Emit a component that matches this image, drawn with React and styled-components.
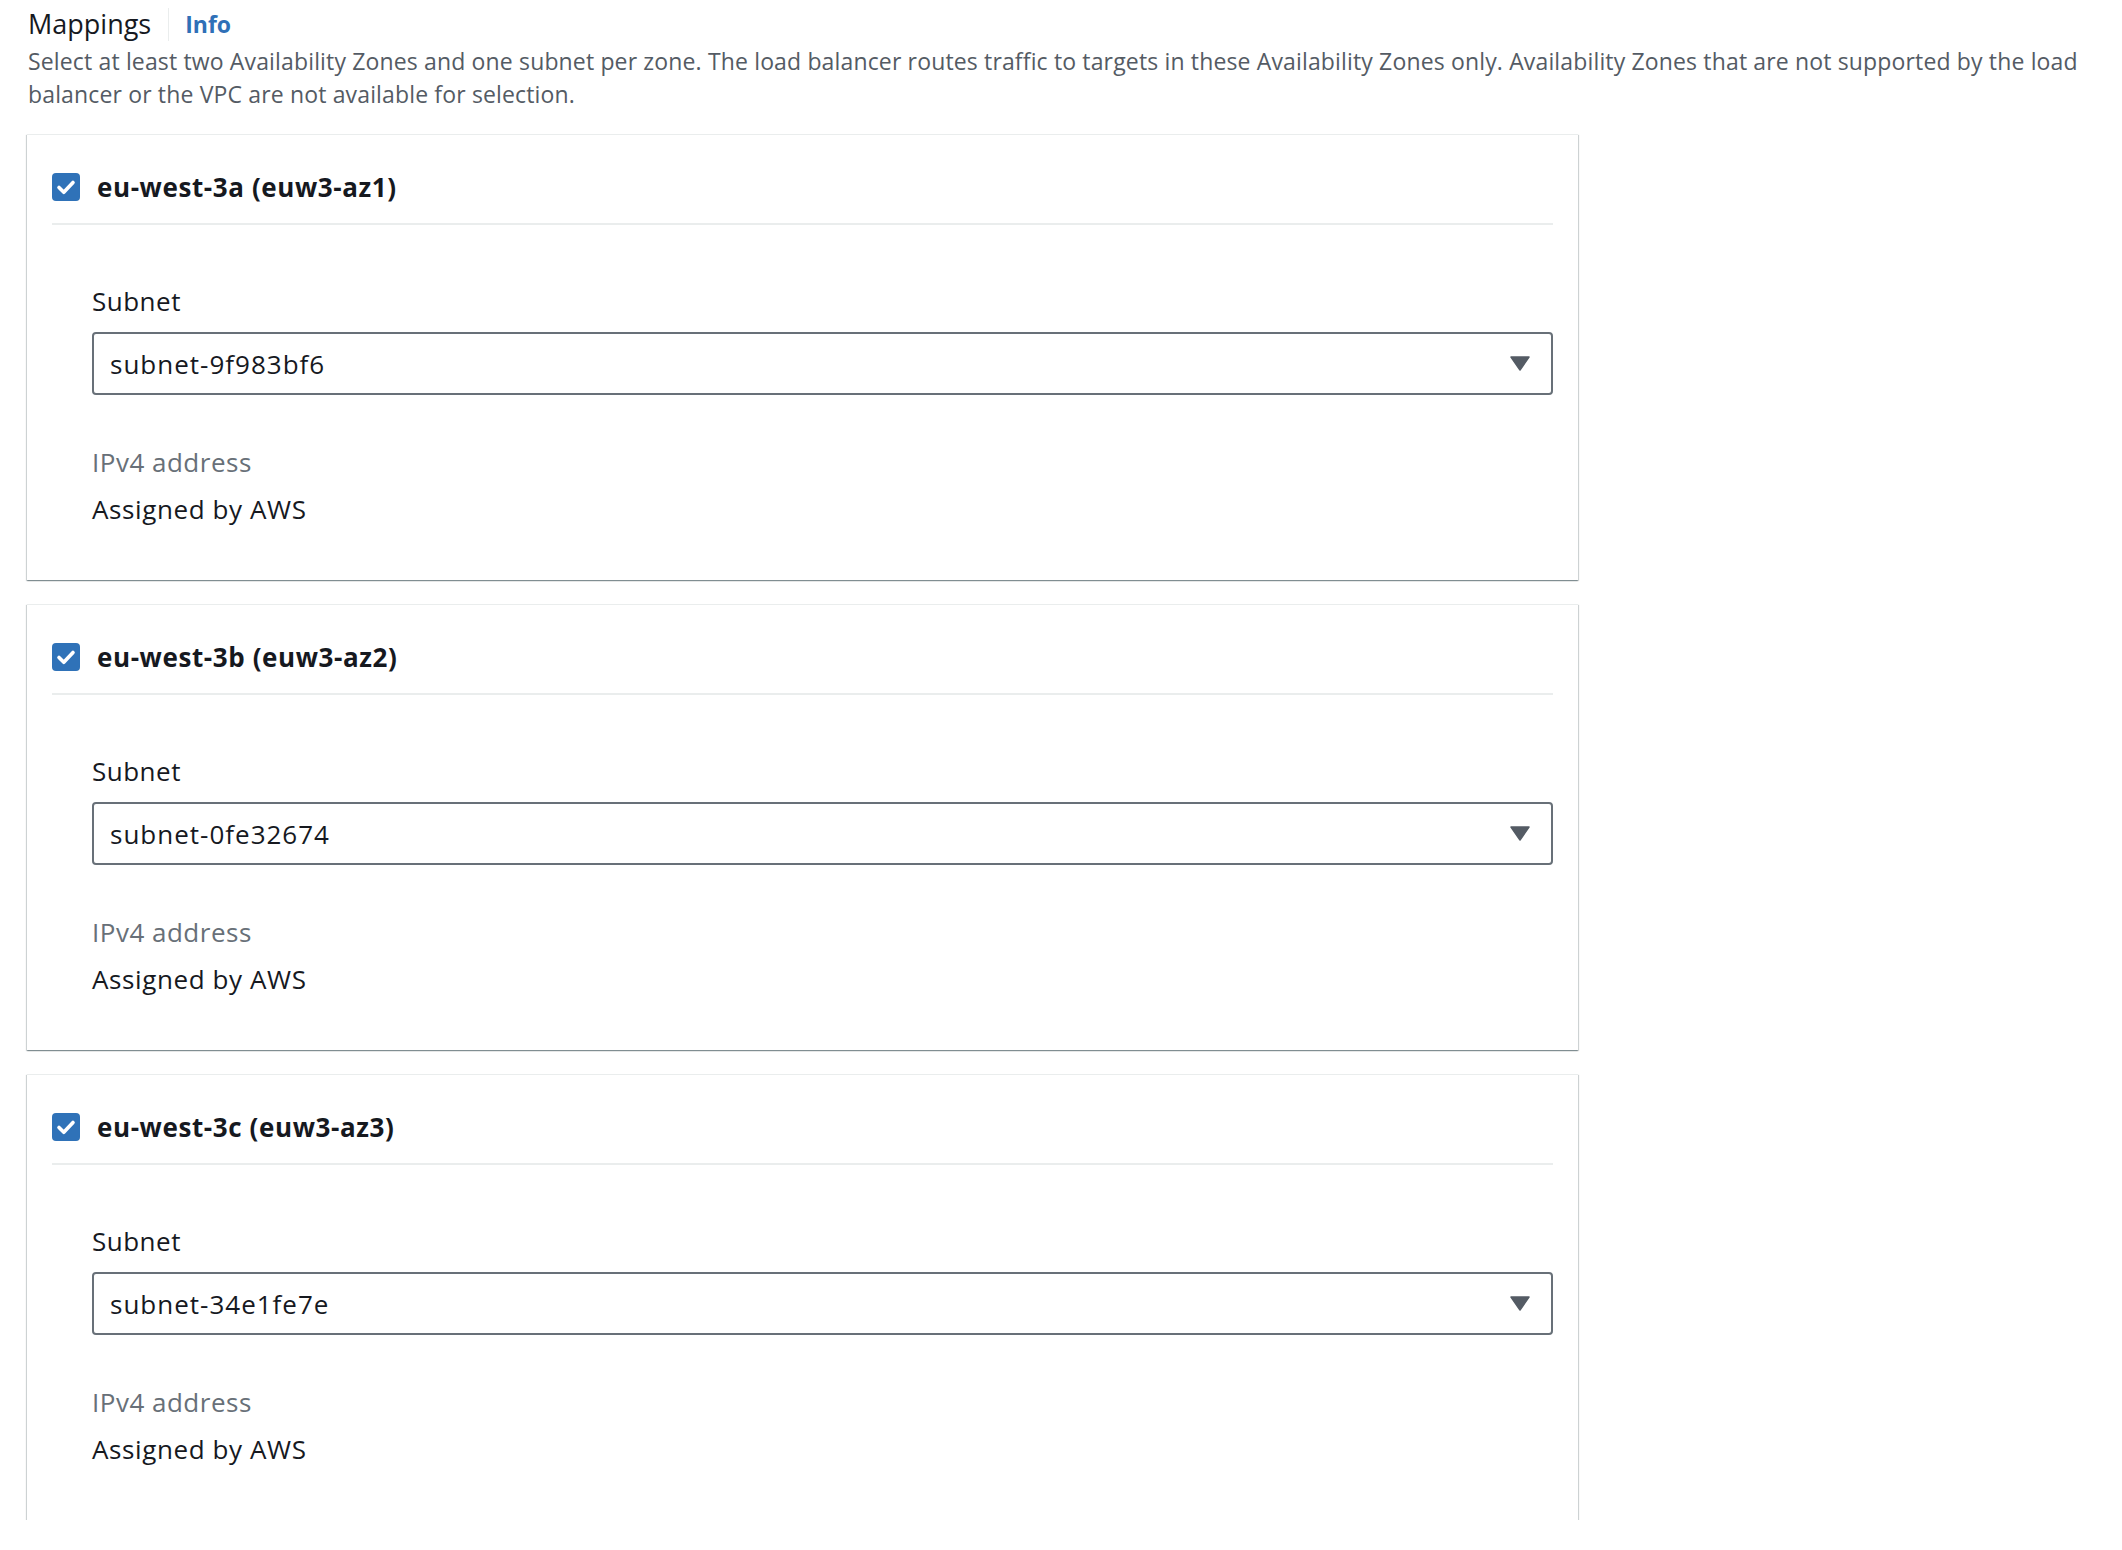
import React from 'react'
import styled, { createGlobalStyle } from 'styled-components'

const GlobalStyle = createGlobalStyle`
    body {
        margin: 0;
        background: #ffffff;
        font-family: 'Open Sans', 'Liberation Sans', Arial, sans-serif;
        color: #16191f;
    }
`

const zones = [
    { id: 'a', name: 'eu-west-3a (euw3-az1)', subnet: 'subnet-9f983bf6' },
    { id: 'b', name: 'eu-west-3b (euw3-az2)', subnet: 'subnet-0fe32674' },
    { id: 'c', name: 'eu-west-3c (euw3-az3)', subnet: 'subnet-34e1fe7e' },
]

const CheckIcon = () => (
    <svg width="28" height="28" viewBox="0 0 28 28">
        <rect width="28" height="28" rx="4" fill="#2f72b8" />
        <path d="M7 14.5l4.8 4.8L21 9.5" fill="none" stroke="#fff" strokeWidth="3.6" strokeLinecap="round" strokeLinejoin="round" />
    </svg>
)

const Caret = () => (
    <svg width="20" height="15" viewBox="0 0 20 15">
        <path d="M1 1h18L10 14z" fill="#545b64" stroke="#545b64" strokeWidth="1.5" strokeLinejoin="round" />
    </svg>
)

const ZoneCard = ({ zone }) => (
    <S.Card>
        <S.CardHeader>
            <CheckIcon />
            <S.ZoneName>{zone.name}</S.ZoneName>
        </S.CardHeader>
        <S.CardBody>
            <S.Label>Subnet</S.Label>
            <S.Select>
                <S.SelectValue>{zone.subnet}</S.SelectValue>
                <Caret />
            </S.Select>
            <S.Label $muted>IPv4 address</S.Label>
            <S.Value>Assigned by AWS</S.Value>
        </S.CardBody>
    </S.Card>
)

const App = () => {
    return (
        <S.Page>
            <GlobalStyle />
            <S.Header>
                <S.Heading>Mappings</S.Heading>
                <S.Divider />
                <S.InfoLink>Info</S.InfoLink>
            </S.Header>
            <S.Description>
                Select at least two Availability Zones and one subnet per zone. The load balancer routes traffic to
                targets in these Availability Zones only. Availability Zones that are not supported by the load
                balancer or the VPC are not available for selection.
            </S.Description>
            <S.CardList>
                {zones.map(zone => (
                    <ZoneCard key={zone.id} zone={zone} />
                ))}
            </S.CardList>
        </S.Page>
    )
}

const S = {
    Page: styled.div`
        padding: 7px 0 0 28px;
        width: 2070px;
    `,
    Header: styled.div`
        display: flex;
        align-items: center;
        height: 34px;
    `,
    Heading: styled.h2`
        margin: 0;
        font-size: 27px;
        font-weight: 400;
        line-height: 34px;
        color: #16191f;
    `,
    Divider: styled.div`
        width: 1px;
        height: 33px;
        background: #eaeded;
        margin: 0 16px 0 17px;
    `,
    InfoLink: styled.a`
        font-size: 23px;
        font-weight: 700;
        color: #2f70b7;
        line-height: 34px;
    `,
    Description: styled.p`
        margin: 4px 0 0 0;
        font-size: 23px;
        line-height: 33px;
        letter-spacing: 0.15px;
        color: #545b64;
    `,
    CardList: styled.div`
        display: flex;
        flex-direction: column;
        gap: 24px;
        margin: 23px 0 0 -1px;
        width: 1551px;
    `,
    Card: styled.section`
        background: #ffffff;
        border-top: 1px solid #eaeded;
        box-shadow: 0 1px 1px 0 rgba(0, 28, 36, 0.3), 1px 1px 1px 0 rgba(0, 28, 36, 0.15),
            -1px 1px 1px 0 rgba(0, 28, 36, 0.15);
        padding: 0 25px 55px 25px;
    `,
    CardHeader: styled.div`
        display: flex;
        align-items: center;
        gap: 17px;
        padding: 38px 0 22px 0;
        border-bottom: 2px solid #eaeded;
    `,
    ZoneName: styled.span`
        font-size: 26px;
        font-weight: 700;
        line-height: 28px;
        letter-spacing: 0.6px;
        color: #16191f;
    `,
    CardBody: styled.div`
        display: flex;
        flex-direction: column;
        padding: 60px 0 0 40px;
    `,
    Label: styled.div`
        font-size: 26px;
        line-height: 32px;
        letter-spacing: 0.5px;
        color: ${({ $muted }) => ($muted ? '#687078' : '#16191f')};
        margin-top: ${({ $muted }) => ($muted ? '51px' : '0')};
    `,
    Select: styled.div`
        display: flex;
        align-items: center;
        justify-content: space-between;
        box-sizing: border-box;
        height: 63px;
        margin-top: 15px;
        padding: 0 21px 0 16px;
        border: 2px solid #687078;
        border-radius: 4px;
    `,
    SelectValue: styled.span`
        font-size: 26px;
        letter-spacing: 1px;
        color: #16191f;
    `,
    Value: styled.div`
        margin-top: 15px;
        font-size: 26px;
        line-height: 32px;
        letter-spacing: 0.6px;
        color: #16191f;
    `,
}

export default App
